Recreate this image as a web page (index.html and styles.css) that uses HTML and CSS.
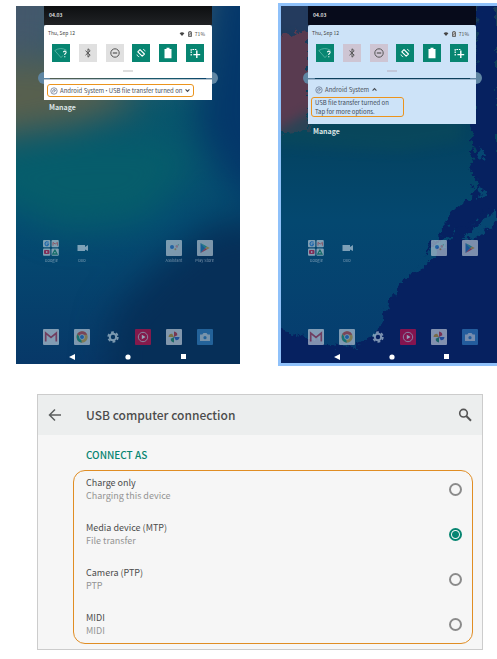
FILE: index.html
```html
<!DOCTYPE html>
<html lang="en">
<head>
<meta charset="utf-8">
<title>USB computer connection</title>
<link rel="stylesheet" href="styles.css">
</head>
<body>
<svg class="sprite" aria-hidden="true">
  <symbol id="wifi-ask" viewBox="0 0 18 18"><path d="M2.8 6.6Q8.6 2.6 14.6 6.3M2.8 6.6L9 13.6L11 11.4" fill="none" stroke="#62b8a8" stroke-width=".8"/><path d="M11.4 8.3Q11.5 7.1 12.8 7.1Q14.2 7.2 14.1 8.5Q14 9.3 12.8 10.1V11M12.8 12.2V13.3" fill="none" stroke="#fff" stroke-width="1.1"/></symbol>
  <symbol id="bluetooth" viewBox="0 0 18 18"><path d="M6.5 6.7L11.2 11.2L9 13.2V4.8L11.2 6.7L6.5 11.2" fill="none" stroke="#555" stroke-width="1"/></symbol>
  <symbol id="dnd" viewBox="0 0 18 18"><circle cx="9" cy="9" r="4.2" fill="none" stroke="#555"/><path d="M6.8 9H11.2" stroke="#555" stroke-width="1.2"/></symbol>
  <symbol id="rotate" viewBox="0 0 18 18"><path d="M8 5.6L12.4 10L10.2 12.2L5.8 7.8Z" fill="none" stroke="#fff" stroke-width="1.2" stroke-linejoin="round"/><path d="M11 5.2Q12.8 5.6 13.2 7.4M7.2 12.8Q5.2 12.4 4.9 10.5" fill="none" stroke="#d8f0eb" stroke-width=".9"/></symbol>
  <symbol id="battery" viewBox="0 0 18 18"><path d="M5.5 5H7.5V3.8H10.5V5H12.5V14.2H5.5Z" fill="#fff"/></symbol>
  <symbol id="capture" viewBox="0 0 18 18"><path d="M5.2 11.5V5.5H11" fill="none" stroke="#fff" stroke-width="1.2" stroke-dasharray="1.6 .8"/><path d="M10.8 6.4V14M7.4 10.6H14.2" stroke="#fff" stroke-width="1.4"/></symbol>
  <symbol id="wifi" viewBox="0 0 10 8"><path d="M1 2.6Q5 -.6 9 2.6L5 7.3Z" fill="#444"/></symbol>
  <symbol id="saver" viewBox="0 0 8 8"><path d="M2 1.5H3V.7H5V1.5H6V7.3H2Z" fill="#bbb" stroke="#555" stroke-width="1.1"/><path d="M2.6 5.8L5.3 2.7" stroke="#555" stroke-width=".8"/></symbol>
  <symbol id="system" viewBox="0 0 10 10"><circle cx="5" cy="5" r="4" fill="none" stroke="#62718b" stroke-width=".9"/><path d="M3.3 6.8Q2.7 3.2 5 3Q7 3 6.7 4.8H4.3M4.4 7L6.7 4.8" fill="none" stroke="#62718b" stroke-width=".8"/></symbol>
  <symbol id="chevron" viewBox="0 0 8 8"><path d="M1.8 2.8L4 5L6.2 2.8" fill="none" stroke="#454a52" stroke-width="1.3"/></symbol>
  <symbol id="folder" viewBox="0 0 16 16"><g fill="#d9dfe5"><rect width="7.3" height="7.3" rx="1"/><rect x="8.5" width="7.3" height="7.3" rx="1"/><rect y="8.5" width="7.3" height="7.3" rx="1"/><rect x="8.5" y="8.5" width="7.3" height="7.3" rx="1"/></g><path d="M5.7 2.3Q3 .8 2 3.5Q2.1 6.1 4.7 5.7L5.5 4H3.5" fill="none" stroke="#2879d8" stroke-width="1.1"/><path d="M10 5.7V2.4L12.2 4L14.4 2.4V5.7" fill="none" stroke="#e66565" stroke-width="1"/><rect x="1" y="10" width="5.5" height="4" rx="1" fill="#d71e48"/><path d="M3 11L5 12L3 13Z" fill="#fff"/><path d="M12 9.7L9.7 14H14L11.8 9.7" fill="none" stroke="#248867" stroke-width="1.3"/></symbol>
  <symbol id="duo" viewBox="0 0 16 16"><path d="M3.5 5H11V7L14 5V11L11 9.5V11H3.5Z" fill="#d5e1eb"/></symbol>
  <symbol id="assistant" viewBox="0 0 16 16"><rect width="16" height="16" rx="1" fill="#d2dde4"/><circle cx="6" cy="7" r="2" fill="#397bca"/><circle cx="10.8" cy="6.4" r="1.3" fill="#d69aa1"/><circle cx="9.4" cy="9.3" r="1" fill="#c99c53"/><circle cx="12.3" cy="4.8" r=".6" fill="#4ca37b"/></symbol>
  <symbol id="play" viewBox="0 0 16 16"><rect width="16" height="16" rx="1" fill="#d2dde4"/><path d="M3.5 3V13L8.5 8Z" fill="#287dbb"/><path d="M3.5 3L10 6.5L8.5 8Z" fill="#2cac99"/><path d="M3.5 13L10 9.5L8.5 8Z" fill="#cc4455"/><path d="M10 6.5L12.8 8L10 9.5L8.5 8Z" fill="#d3a849"/></symbol>
  <symbol id="mail" viewBox="0 0 16 16"><rect width="16" height="16" rx="1" fill="#dce2e9"/><path d="M2.7 12.5V4L8 8.5L13.3 4V12.5" fill="none" stroke="#bd4059" stroke-width="1.7"/></symbol>
  <symbol id="chrome" viewBox="0 0 16 16"><rect width="16" height="16" rx="1" fill="#d5dde5"/><circle cx="8" cy="8" r="5.7" fill="#d5a747"/><path d="M8 8L3.1 5Q5 2.2 8 2.3Q11.7 2.3 13.2 5.7H8Z" fill="#cc4b4e"/><path d="M3.1 5L7 9.8L7.8 13.7Q1.2 12.8 3.1 5Z" fill="#23977c"/><circle cx="8" cy="8" r="2.7" fill="#d5dde5"/><circle cx="8" cy="8" r="2" fill="#3275c4"/></symbol>
  <symbol id="settings" viewBox="0 0 16 16"><circle cx="8" cy="8" r="4.8" fill="none" stroke="#d0e2ea" stroke-width="1.8" stroke-dasharray="2.8 2.23"/><circle cx="8" cy="8" r="3.2" fill="none" stroke="#d0e2ea" stroke-width="2"/></symbol>
  <symbol id="music" viewBox="0 0 16 16"><rect width="16" height="16" rx="1" fill="#e00b43"/><circle cx="8" cy="8" r="4.7" fill="none" stroke="#e5c4d4"/><path d="M6.8 5.7L10.5 8L6.8 10.3Z" fill="#fff"/></symbol>
  <symbol id="photos" viewBox="0 0 16 16"><rect width="16" height="16" rx="1" fill="#dce2e9"/><path d="M8 8V2.5Q11.5 3 11.3 6.2L8 8Z" fill="#c93d4c"/><path d="M8 8H13.5Q13 11.5 9.8 11.3Z" fill="#356bc3"/><path d="M8 8V13.5Q4.5 13 4.7 9.8Z" fill="#309571"/><path d="M8 8H2.5Q3 4.5 6.2 4.7Z" fill="#cc9f36"/></symbol>
  <symbol id="camera" viewBox="0 0 16 16"><rect width="16" height="16" rx="1" fill="#3987c9"/><path d="M3 5.5H5.3L6.5 4H9.5L10.7 5.5H13V12H3Z" fill="#c9dce8"/><circle cx="8" cy="8.7" r="1.6" fill="#3987c9"/></symbol>
  <symbol id="nav-back" viewBox="0 0 8 8"><path d="M7 1V7L1 4Z" fill="#fff"/></symbol>
  <symbol id="nav-home" viewBox="0 0 8 8"><circle cx="4" cy="4" r="2.6" fill="#fff"/></symbol>
  <symbol id="nav-recent" viewBox="0 0 8 8"><rect x="1" y="1" width="5" height="5" fill="#fff"/></symbol>
</svg>

<main class="page">
  <div class="phones">
    <section class="phone phone-soft">
      <svg class="wallpaper" viewBox="0 0 224 358" preserveAspectRatio="none" aria-hidden="true">
        <defs>
          <linearGradient id="sea" x1="0" y1="0" x2="0" y2="1"><stop offset="0" stop-color="#3c5f70"/><stop offset=".3" stop-color="#08566c"/><stop offset=".6" stop-color="#044c72"/><stop offset="1" stop-color="#073868"/></linearGradient>
          <filter id="soft" filterUnits="userSpaceOnUse" x="-80" y="-80" width="390" height="520" color-interpolation-filters="sRGB"><feGaussianBlur stdDeviation="17"/></filter>
        </defs>
        <rect width="224" height="358" fill="url(#sea)"/>
        <g filter="url(#soft)">
          <path d="M-60 55H60L130 95L60 118L-60 138Z" fill="#59604e"/>
          <path d="M-60 -60H40V50H-60Z" fill="#44586b"/>
          <path d="M-60 150L60 130L150 130L180 155L130 215L50 225L-60 175Z" fill="#065d6b"/>
          <path d="M280 215L200 215L130 270L95 310L85 420H280Z" fill="#062f58"/>
          <path d="M198 -60H280V220L215 185L180 120Z" fill="#04376a"/>
        </g>
      </svg>
      <span class="edge edge-left"></span><span class="edge edge-right"></span>
      <div class="shade">
        <div class="status">04.03</div>
        <div class="quick">
          <div class="info"><span>Thu, Sep 12</span><span class="power"><svg><use href="#wifi"/></svg><svg><use href="#saver"/></svg>71%</span></div>
          <div class="tiles">
            <button class="tile on" aria-label="Wi-Fi"><svg><use href="#wifi-ask"/></svg></button>
            <button class="tile" aria-label="Bluetooth"><svg><use href="#bluetooth"/></svg></button>
            <button class="tile" aria-label="Do not disturb"><svg><use href="#dnd"/></svg></button>
            <button class="tile on" aria-label="Auto-rotate"><svg><use href="#rotate"/></svg></button>
            <button class="tile on" aria-label="Battery"><svg><use href="#battery"/></svg></button>
            <button class="tile on" aria-label="Screenshot"><svg><use href="#capture"/></svg></button>
          </div>
          <div class="handle"></div>
        </div>
        <div class="notice">
          <div class="line marked"><svg><use href="#system"/></svg><span>Android System <b class="dot">•</b> USB file transfer turned on</span><svg class="chev"><use href="#chevron"/></svg></div>
        </div>
        <button class="manage">Manage</button>
      </div>
      <div class="home">
        <div class="apps">
          <div class="app"><svg><use href="#folder"/></svg><span>Google</span></div>
          <div class="app"><svg><use href="#duo"/></svg><span>Duo</span></div>
          <div class="app late"><svg><use href="#assistant"/></svg><span>Assistant</span></div>
          <div class="app"><svg><use href="#play"/></svg><span>Play Store</span></div>
        </div>
        <div class="apps dock">
          <svg><use href="#mail"/></svg><svg><use href="#chrome"/></svg><svg><use href="#settings"/></svg><svg><use href="#music"/></svg><svg><use href="#photos"/></svg><svg><use href="#camera"/></svg>
        </div>
        <div class="nav"><button aria-label="Back"><svg><use href="#nav-back"/></svg></button><button aria-label="Home"><svg><use href="#nav-home"/></svg></button><button aria-label="Recent"><svg><use href="#nav-recent"/></svg></button></div>
      </div>
    </section>

    <section class="phone phone-blue">
      <svg class="wallpaper" viewBox="0 0 216 357" preserveAspectRatio="none" aria-hidden="true">
        <defs>
          <linearGradient id="deep" x1="0" y1="0" x2="0" y2="1"><stop offset="0" stop-color="#183c59"/><stop offset=".35" stop-color="#04425f"/><stop offset=".6" stop-color="#044870"/><stop offset="1" stop-color="#063c6f"/></linearGradient>
          <filter id="rough" x="-10%" y="-10%" width="120%" height="120%" color-interpolation-filters="sRGB"><feTurbulence type="fractalNoise" baseFrequency=".15" numOctaves="4" seed="4"/><feDisplacementMap in="SourceGraphic" scale="14" xChannelSelector="R" yChannelSelector="G"/></filter>
          <filter id="haze" x="-30%" y="-30%" width="160%" height="160%" color-interpolation-filters="sRGB"><feGaussianBlur stdDeviation="6"/></filter>
        </defs>
        <rect width="216" height="357" fill="url(#deep)"/>
        <path d="M-10 -10H35V35L-10 28Z" fill="#243b5e" filter="url(#haze)"/>
        <path d="M-10 32L14 28L27 26V125L-10 128Z" fill="#593b50" filter="url(#rough)"/>
        <path d="M30 105H180V135L120 145L-10 138V128Z" fill="#0b4a5a" opacity=".6" filter="url(#haze)"/>
        <g filter="url(#rough)" fill="#062160">
          <path d="M198 -10H240V160L214 166L216 176L196 190L192 205L178 214L174 228L148 256L120 276L104 306L98 326L75 340L45 338L20 330L-10 320V380H240V-10L198 -10L190 120L200 150L193 168L199 200H216V-10Z"/>
          <path d="M198 120L189 130L194 152L187 165L196 170L190 192L170 206L164 222L150 240L142 250L160 235L186 218L216 196V120Z"/>
        </g>
        <g filter="url(#rough)" fill="#064772"><path d="M182 234L198 216L216 202V216L196 232Z"/><path d="M196 140L203 147L199 156Z"/><path d="M197 180L205 186L196 194Z"/></g>
      </svg>
      <span class="edge edge-left"></span><span class="edge edge-right"></span>
      <div class="shade">
        <div class="status">04.03</div>
        <div class="quick">
          <div class="info"><span>Thu, Sep 12</span><span class="power"><svg><use href="#wifi"/></svg><svg><use href="#saver"/></svg>71%</span></div>
          <div class="tiles">
            <button class="tile on" aria-label="Wi-Fi"><svg><use href="#wifi-ask"/></svg></button>
            <button class="tile" aria-label="Bluetooth"><svg><use href="#bluetooth"/></svg></button>
            <button class="tile" aria-label="Do not disturb"><svg><use href="#dnd"/></svg></button>
            <button class="tile on" aria-label="Auto-rotate"><svg><use href="#rotate"/></svg></button>
            <button class="tile on" aria-label="Battery"><svg><use href="#battery"/></svg></button>
            <button class="tile on" aria-label="Screenshot"><svg><use href="#capture"/></svg></button>
          </div>
          <div class="handle"></div>
        </div>
        <div class="notice expanded">
          <div class="line"><svg><use href="#system"/></svg><span>Android System</span><svg class="chev up"><use href="#chevron"/></svg></div>
          <p class="marked detail">USB file transfer turned on<br>Tap for more options.</p>
        </div>
        <button class="manage">Manage</button>
      </div>
      <div class="home">
        <div class="apps">
          <div class="app"><svg><use href="#folder"/></svg><span>Google</span></div>
          <div class="app"><svg><use href="#duo"/></svg><span>Duo</span></div>
          <div class="app late"><svg><use href="#assistant"/></svg></div>
          <div class="app"><svg><use href="#play"/></svg></div>
        </div>
        <div class="apps dock">
          <svg><use href="#mail"/></svg><svg><use href="#chrome"/></svg><svg><use href="#settings"/></svg><svg><use href="#music"/></svg><svg><use href="#photos"/></svg><svg><use href="#camera"/></svg>
        </div>
        <div class="nav"><button aria-label="Back"><svg><use href="#nav-back"/></svg></button><button aria-label="Home"><svg><use href="#nav-home"/></svg></button><button aria-label="Recent"><svg><use href="#nav-recent"/></svg></button></div>
      </div>
    </section>
  </div>

  <section class="settings">
    <header class="bar">
      <button aria-label="Go back"><svg viewBox="0 0 14 14"><path d="M13 7H2M7 1.5L1.5 7L7 12.5" fill="none" stroke="#5b5e5e" stroke-width="1.5"/></svg></button>
      <h1>USB computer connection</h1>
      <button aria-label="Search"><svg viewBox="0 0 14 14"><circle cx="5.5" cy="5.2" r="3.8" fill="none" stroke="#555" stroke-width="1.6"/><path d="M8.3 8L13 12.7" stroke="#555" stroke-width="2"/></svg></button>
    </header>
    <h2>CONNECT AS</h2>
    <div class="options">
      <label class="option"><span>Charge only<small>Charging this device</small></span><input type="radio" name="usb"></label>
      <label class="option"><span>Media device (MTP)<small>File transfer</small></span><input type="radio" name="usb" checked></label>
      <label class="option"><span>Camera (PTP)<small>PTP</small></span><input type="radio" name="usb"></label>
      <label class="option"><span>MIDI<small>MIDI</small></span><input type="radio" name="usb"></label>
    </div>
  </section>
</main>
</body>
</html>
```
FILE: styles.css
```css
* { box-sizing: border-box; }
body {
  margin: 0;
  background: #fff;
  font-family: "Noto Sans CJK SC", "Open Sans", sans-serif;
  overflow-x: hidden;
}
button { border: 0; padding: 0; margin: 0; background: none; font: inherit; color: inherit; }
svg { display: block; }
.sprite { position: absolute; width: 0; height: 0; }
.page { padding-top: 3px; }

.phones {
  display: grid;
  grid-template-columns: 224fr 219fr;
  column-gap: 38px;
  padding-left: 16px;
}
.phone { position: relative; display: flex; flex-direction: column; overflow: hidden; }
.phone-soft { margin: 3px 0 2px; }
.phone-blue { border: 3px solid #8fc1fa; border-right: 0; }
.wallpaper { position: absolute; inset: 0; width: 100%; height: 100%; }
.edge { position: absolute; top: 66px; width: 12px; height: 12px; border-radius: 50%; background: #5f86a3; }
.edge-left { left: 22px; }
.edge-right { right: 22px; }
.phone-blue .edge-right { right: 15px; }

.shade { position: relative; padding: 0 28px; height: 234px; }
.phone-blue .shade { padding: 0 21px 0 27px; }
.status {
  height: 19px;
  padding-left: 5px;
  background: linear-gradient(#0d0f11, #202225);
  color: #ddd;
  font-size: 5px;
  line-height: 18px;
  font-weight: 700;
}
.phone-blue .status { background: #070b1b; }
.quick { height: 53px; padding: 3px 4px 0; border-radius: 2px 2px 0 0; background: #fff; }
.info { display: flex; justify-content: space-between; height: 11px; padding: 0 3px 0 0; line-height: 9px; font-size: 5px; color: #444; }
.power { display: flex; align-items: center; gap: 2px; }
.power svg { width: 6px; height: 6px; }
.tiles { display: flex; justify-content: space-between; padding: 5px 4px 0; }
.tile { width: 18px; height: 18px; background: #e0e0e0; }
.tile svg { width: 18px; height: 18px; }
.tile.on { background: #078571; }
.handle { width: 10px; height: 2px; margin: 8px auto 0; background: #dedede; }
.notice { height: 21px; margin-top: 1px; padding: 4px 3px; background: #fff; border-top: 1px solid #b9c6cf; }
.line { display: flex; align-items: center; gap: 2px; width: max-content; height: 13px; color: #4a505a; font-size: 6px; line-height: 9px; }
.line svg { width: 8px; height: 8px; }
.line .chev { width: 7px; height: 7px; }
.dot { font-family: "Noto Sans", sans-serif; font-size: 5px; font-weight: 400; }
.marked { border: 1px solid #eb941d; border-radius: 3px; padding: 0 2px; }
.up { transform: rotate(180deg); }
.phone-blue .quick, .phone-blue .notice { background: #cde3f8; }
.phone-blue .tile:not(.on) { background: #cec5d3; }
.phone-blue .handle { background: #c2c8da; }
.phone-blue .expanded { height: 45px; padding-top: 3px; border-top: 1px solid #9fb8d0; }
.expanded .line { margin-left: 4px; }
.detail { margin: 1px 0 0; width: 93px; padding-left: 3px; font-size: 6px; line-height: 9px; color: #3d4b59; }
.manage { display: block; margin-left: 5px; font-size: 7px; line-height: 15px; font-weight: 700; color: #dce4e5; }

.home { position: relative; }
.apps { display: grid; grid-template-columns: repeat(6, 1fr); padding: 0 20px; height: 89px; opacity: .58; }
.phone-blue .apps { padding-right: 12px; }
.apps svg { width: 16px; height: 16px; margin: 0 auto; }
.app { text-align: center; color: #c2d0de; font-size: 4px; line-height: 9px; white-space: nowrap; }
.late { grid-column: 5; }
.dock { height: 22px; }
.nav { display: grid; grid-template-columns: repeat(3, 1fr); padding: 2px 28px 3px; }
.phone-blue .nav { padding: 2px 22px 2px 28px; }
.nav svg { width: 8px; height: 8px; margin: 0 auto; }

.settings { margin: 28px 14px 0 37px; border: 1px solid #ccc; background: #f6f6f6; color: #4c4c4c; padding-bottom: 5px; }
.bar { display: flex; align-items: center; height: 40px; padding: 0 10px; background: #eceeee; }
.bar h1 { flex: 1; margin: 0 0 0 24px; font-size: 12px; font-weight: 500; line-height: 20px; }
.bar svg { width: 14px; height: 14px; }
.settings h2 { margin: 12px 0 7px 48px; font-size: 10px; font-weight: 500; line-height: 16px; color: #078571; }
.options { margin: 0 9px 0 35px; padding: 0 10px 0 12px; border: 1px solid #e08d24; border-radius: 12px; height: 174px; display: grid; grid-template-rows: repeat(4, 45px); align-content: start; }
.option { display: flex; align-items: center; justify-content: space-between; padding-bottom: 9px; font-size: 9px; line-height: 13px; height: 45px; }
.option small { display: block; color: #949494; font-size: 9px; }
.option input { appearance: none; width: 13px; height: 13px; margin: 0; border: 2px solid #8b8b8b; border-radius: 50%; }
.option input:checked { border-color: #078571; background: radial-gradient(circle, #078571 0 3px, transparent 4px); }
```
